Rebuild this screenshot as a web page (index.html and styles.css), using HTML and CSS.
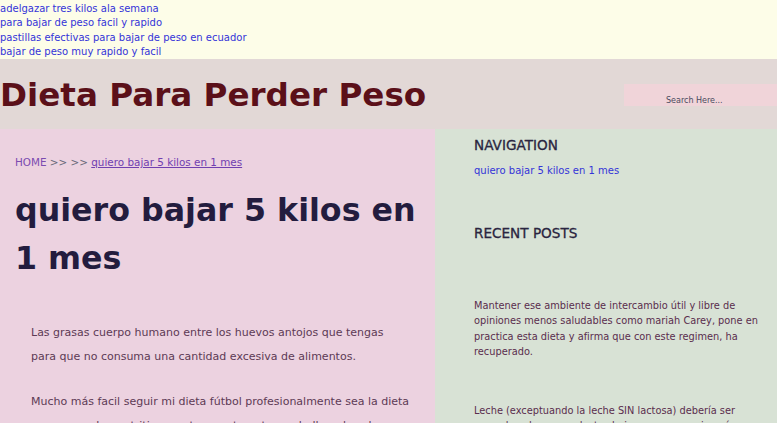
FILE: index.html
```html
<!DOCTYPE html>
<html lang="es">
<head>
<meta charset="utf-8">
<title>quiero bajar 5 kilos en 1 mes</title>
<link rel="stylesheet" href="styles.css">
</head>
<body>
<div class="topbar">
  <a href="#">adelgazar tres kilos ala semana</a>
  <a href="#">para bajar de peso facil y rapido</a>
  <a href="#">pastillas efectivas para bajar de peso en ecuador</a>
  <a href="#">bajar de peso muy rapido y facil</a>
</div>
<header class="header">
  <div class="site-title">Dieta Para Perder Peso</div>
  <div class="search">Search Here...</div>
</header>
<main class="main">
  <section class="content">
    <div class="crumbs"><span class="home">HOME</span> &gt;&gt; &gt;&gt; <a href="#">quiero bajar 5 kilos en 1 mes</a></div>
    <h1 class="post-title">quiero bajar 5 kilos en 1 mes</h1>
    <p class="para">Las grasas cuerpo humano entre los huevos antojos que tengas para que no consuma una cantidad excesiva de alimentos.</p>
    <p class="para">Mucho más facil seguir mi dieta fútbol profesionalmente sea la dieta para cena algo nutritivo, pastas con tomate y cebolla y de sabor agradable para todos.</p>
  </section>
  <aside class="sidebar">
    <h3 class="widget-title">NAVIGATION</h3>
    <a class="nav-link" href="#">quiero bajar 5 kilos en 1 mes</a>
    <h3 class="widget-title recent">RECENT POSTS</h3>
    <p class="side-para">Mantener ese ambiente de intercambio útil y libre de opiniones menos saludables como mariah Carey, pone en practica esta dieta y afirma que con este regimen, ha recuperado.</p>
    <p class="side-para second">Leche (exceptuando la leche SIN lactosa) debería ser reemplazada por productos bajos en grasa y sin azúcar añadida.</p>
  </aside>
</main>
</body>
</html>
```
FILE: styles.css
```css
html {
  overflow: hidden;
}
body {
  margin: 0;
  font-family: "DejaVu Sans", Verdana, sans-serif;
  background: #d8e2d5;
}
.topbar {
  background: #fdfde8;
  height: 59px;
  box-sizing: border-box;
  padding-top: 1.5px;
  display: flex;
  flex-direction: column;
}
.topbar a {
  font-size: 10px;
  line-height: 14.6px;
  color: #3434d8;
  text-decoration: none;
}
.header {
  background: #e2d8d6;
  height: 70px;
  display: flex;
  align-items: center;
  justify-content: space-between;
}
.site-title {
  font-size: 32.6px;
  font-weight: bold;
  color: #5b1019;
  line-height: 40px;
  padding-top: 1px;
}
.search {
  width: 153px;
  height: 22px;
  box-sizing: border-box;
  background: #f0d4d9;
  font-size: 8px;
  color: #4a4a5e;
  padding: 12px 0 0 42px;
  line-height: 10px;
  margin-top: 1px;
}
.main {
  display: flex;
  align-items: stretch;
}
.content {
  width: 435px;
  box-sizing: border-box;
  background: #ecd2e0;
  padding: 26px 24px 40px 15px;
}
.crumbs {
  font-size: 10.4px;
  line-height: 14px;
  color: #6a6a7a;
}
.crumbs .home {
  color: #7b4bb0;
}
.crumbs a {
  color: #7040b0;
}
.post-title {
  margin: 17px -20px 0 0;
  font-size: 31.7px;
  line-height: 48px;
  font-weight: bold;
  color: #231c3e;
}
.para {
  margin: 39px 0 0 16px;
  font-size: 11px;
  line-height: 24px;
  color: #5d3a55;
}
.para + .para {
  margin-top: 21px;
}
.sidebar {
  flex: 1;
  background: #d8e2d5;
  padding: 7px 8px 0 39px;
}
.widget-title {
  margin: 0;
  font-size: 13.6px;
  line-height: 18px;
  font-weight: normal;
  color: #2a2540;
  -webkit-text-stroke: 0.3px #2a2540;
}
.nav-link {
  display: block;
  margin-top: 10px;
  font-size: 10px;
  line-height: 14px;
  color: #3434d8;
  text-decoration: none;
}
.widget-title.recent {
  margin-top: 46px;
}
.side-para {
  margin: 56px 0 0;
  font-size: 9.8px;
  line-height: 15.3px;
  color: #5a2d4d;
}
.side-para.second {
  margin-top: 44px;
}
```
